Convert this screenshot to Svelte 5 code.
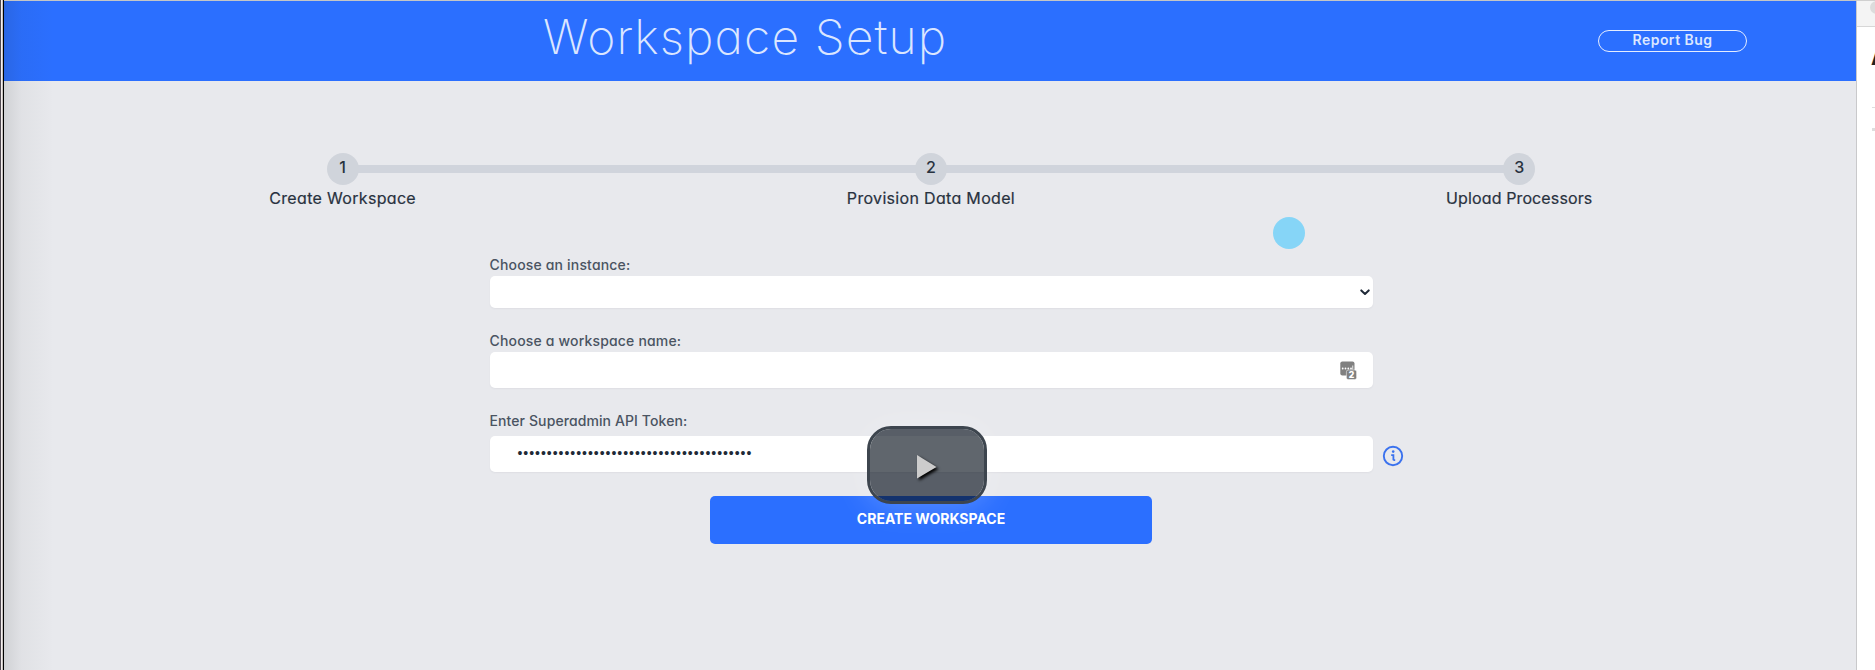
<script>
  const steps = ['Create Workspace', 'Provision Data Model', 'Upload Processors'];
  const token = '•'.repeat(40);
</script>

<div class="screen">
  <div class="edge"></div>
  <div class="app">
    <header>
      <h1>Workspace Setup</h1>
      <button class="report">Report Bug</button>
    </header>

    <main>
      <ol class="steps">
        {#each steps as step, i}
          <li>
            <span class="num">{i + 1}</span>
            <span class="name s{i}">{step}</span>
          </li>
        {/each}
      </ol>

      <form onsubmit={(e) => e.preventDefault()}>
        <span class="label l1">Choose an instance:</span>
        <div class="field select">
          <svg width="10" height="7" viewBox="0 0 10 7"><path d="M1.3 1.4 5 4.9 8.7 1.4" fill="none" stroke="#1f2937" stroke-width="2" stroke-linecap="round" stroke-linejoin="round" /></svg>
        </div>

        <span class="label l2">Choose a workspace name:</span>
        <div class="field name-field">
          <svg width="17" height="19" viewBox="0 0 17 19">
            <rect x="0.3" y="0.5" width="14.2" height="14" rx="2" fill="#808080" />
            <g fill="#fff"><circle cx="2.7" cy="7.5" r="0.9" /><circle cx="5.5" cy="7.5" r="0.9" /><circle cx="8.3" cy="7.5" r="0.9" /><circle cx="11" cy="7.5" r="0.9" /><rect x="12.4" y="4.5" width="0.8" height="4" /></g>
            <rect x="6.4" y="9" width="10.2" height="9.6" rx="1.8" fill="#808080" stroke="#fff" stroke-width="0.5" />
            <text x="11.5" y="17" text-anchor="middle" class="badge">2</text>
          </svg>
        </div>

        <span class="label l3">Enter Superadmin API Token:</span>
        <div class="token-row">
          <div class="field token"><span>{token}</span></div>
          <svg class="info" width="22" height="22" viewBox="0 0 22 22">
            <circle cx="11" cy="11" r="9.2" fill="none" stroke="#3b72ee" stroke-width="1.9" />
            <circle cx="11.2" cy="6.6" r="1.3" fill="#3b72ee" />
            <path d="M9.2 10.1h2.2v5.2M11.4 15.2h1.8" fill="none" stroke="#3b72ee" stroke-width="1.8" />
          </svg>
        </div>

        <button class="create"><span>CREATE WORKSPACE</span></button>
      </form>
    </main>
    <div class="shade"></div>
  </div>

  <aside>
    <div class="tab"><i></i></div>
    <div class="side">
      <b>A</b>
      <hr class="thin" /><hr class="thick" />
    </div>
  </aside>

  <div class="cursor"></div>
  <button class="play" aria-label="Play">
    <svg width="26" height="30" viewBox="0 0 26 30"><path d="M1 1v23.5L20.5 13Z" fill="#ccc" /></svg>
  </button>
</div>

<style>
  :global(body) { overflow: hidden; background: #e8e9ed; }
  .screen { position: relative; display: flex; width: 1875px; height: 670px; overflow: hidden; font-family: Inter, Lato, sans-serif; font-feature-settings: 'cv11'; color: #28323f; }
  .screen * { box-sizing: border-box; }
  .edge { width: 4px; background: linear-gradient(90deg, #514b52 0 1px, #f4eeee 1px 2px, #c8c3bf 2px 3px, #000 3px 4px); }
  .app { position: relative; width: 1852px; background: #e8e9ed; border-top: 1px solid #c5c6c6; }
  .shade { position: absolute; inset: 0 auto 0 0; width: 50px; background: linear-gradient(90deg, rgba(35, 40, 35, .12), rgba(35, 40, 35, .04) 35%, transparent); pointer-events: none; }
  header { height: 80px; background: #2b6fff; display: flex; justify-content: space-between; align-items: flex-start; padding: 0 109px 0 539px; }
  h1 { margin: 4px 0 0; font-size: 48px; line-height: 64px; font-weight: 200; letter-spacing: 1.12px; color: #dbe6ff; white-space: nowrap; }
  .report { margin-top: 29px; width: 149px; height: 22px; border: 1px solid #e5edff; border-radius: 11px; padding: 0 0 2px; background: none; color: #dce7ff; font: 600 14px/18px Inter, sans-serif; font-feature-settings: 'cv11'; letter-spacing: .45px; }
  main { display: flex; flex-direction: column; }
  .steps { list-style: none; margin: 72px 0 0 44.5px; padding: 0; display: flex; width: 1765px; }
  li { position: relative; width: 588.3px; display: flex; flex-direction: column; align-items: center; }
  li + li::before { content: ''; position: absolute; top: 12px; right: 50%; width: 100%; height: 8px; background: #d0d4dc; }
  .num { position: relative; z-index: 1; width: 32px; height: 32px; border-radius: 50%; background: #d0d4db; font-weight: 500; font-size: 16px; line-height: 29px; text-align: center; }
  li:not(:last-child) .num { z-index: 2; }
  .name { font-size: 16px; line-height: 22px; margin-top: 2px; font-weight: 400; letter-spacing: .32px; -webkit-text-stroke: .2px #28323f; white-space: nowrap; }
  .s2 { letter-spacing: .12px; }
  form { width: 883px; margin: 44px 0 0 485.5px; display: flex; flex-direction: column; }
  .label { color: #4a5462; font-size: 14px; line-height: 20px; height: 20px; font-weight: 500; letter-spacing: .17px; white-space: nowrap; align-self: flex-start; }
  .l1 { margin-top: 2px; margin-bottom: 1px; }
  .l2 { margin-top: 23px; margin-bottom: 1px; }
  .l3 { margin-top: 23px; margin-bottom: 5px; letter-spacing: .1px; }
  .field { width: 883px; flex: none; background: #fff; border-radius: 5px; box-shadow: 0 1px 2px rgba(60, 70, 90, .06); display: flex; align-items: center; }
  .select { height: 32px; justify-content: flex-end; padding-right: 3px; }
  .name-field { height: 36px; justify-content: flex-end; padding-right: 16px; }
  .badge { font: 900 8.5px Inter, sans-serif; fill: #fff; }
  .token-row { display: flex; align-items: center; gap: 9px; }
  .token { height: 36px; padding: 0 0 2px 28px; }
  .token span { font: 14px/20px 'Liberation Sans', sans-serif; color: #202936; letter-spacing: .97px; }
  .info { flex: none; margin-top: 4px; }
  .create { width: 442px; height: 48px; margin: 24px 0 0 220.5px; padding: 0 0 3px; border: 0; border-radius: 5px; background: #2b6fff; color: #fff; font: 700 14px/20px Inter, sans-serif; }
  aside { width: 19px; background: #fff; border-left: 1px solid #c9c9cb; overflow: hidden; }
  .tab { height: 27px; border-top: 1px solid #d0d0d0; border-bottom: 1px solid #d7d7d7; background: #f4f4f4; padding-left: 13px; }
  .tab i { display: block; width: 13px; height: 13px; border-radius: 50%; background: #dcdcdc; }
  .side { padding-left: 15px; }
  .side b { display: block; height: 80px; padding-top: 18px; margin-left: -1px; font: 800 20px/26px Inter, sans-serif; color: #222; }
  hr { margin: 0; border: 0; background: #dedede; }
  .thin { height: 1px; }
  .thick { height: 3px; margin-top: 20px; }
  .cursor { position: absolute; left: 1272.5px; top: 216.5px; width: 32px; height: 32px; border-radius: 50%; background: #86d5f7; }
  .play { position: absolute; left: 867px; top: 426px; width: 120px; height: 78px; border: 3px solid #3d454e; border-radius: 24px; padding: 7px 0 0 3px; background: rgba(7, 15, 26, .64); background-clip: padding-box; box-shadow: 0 0 32px rgba(255, 255, 255, .25); display: flex; align-items: center; justify-content: center; }
  .play svg { overflow: visible; filter: drop-shadow(2px 2px 1.5px #000); }
</style>
